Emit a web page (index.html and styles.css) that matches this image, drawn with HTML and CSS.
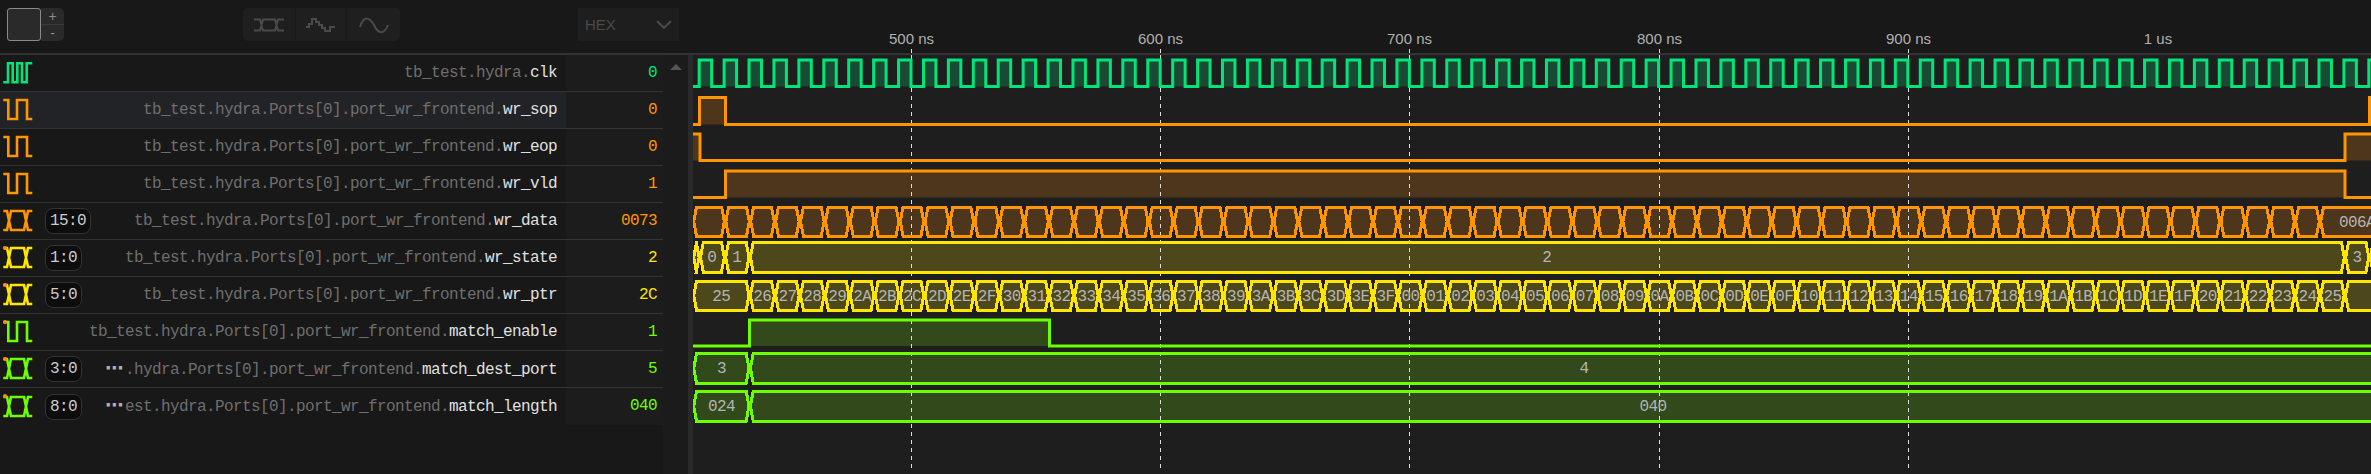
FILE: index.html
```html
<!DOCTYPE html>
<html lang="en">
<head>
    <meta charset="UTF-8">
    <meta name="viewport" content="width=device-width, initial-scale=1.0">
    <title>Waveform Viewer</title>
    <link rel="stylesheet" href="styles.css">
</head>
<body>

    <!-- icons used by the signal list -->
    <svg class="defs" width="0" height="0">
        <symbol id="icon-clk" viewBox="0 0 45 36">
            <path d="M3.3 27.3H8V8.3H12.7V27.3H17.3V8.3H22V27.3H26.7V8.3H32.3"/>
        </symbol>
        <symbol id="icon-bit" viewBox="0 0 45 36">
            <path d="M3.3 8H8.3V27H17V8H27V27H32.3"/>
        </symbol>
        <symbol id="icon-bus" viewBox="0 0 45 36">
            <path d="M3.3 8H7L11 27H24L28 8H32.3M3.3 27H7L11 8H24L28 27H32.3"/>
        </symbol>
    </svg>

    <!-- Toolbar -->
    <header class="toolbar">
        <div class="controls">
            <div class="height-box"></div>
            <div class="stepper">
                <span>+</span>
                <span>-</span>
            </div>
            <div class="mode-group">
                <button class="mode-btn mode-enum">
                    <svg width="32" height="16" viewBox="0 0 32 16"><path d="M1 2.500H7L10 13.500H22L25 2.500H31M1 13.500H7L10 2.500H22L25 13.500H31"/></svg>
                </button>
                <button class="mode-btn mode-step">
                    <svg width="32" height="16" viewBox="0 0 32 16"><path d="M1 10H4V7H7V2H11V5H14V8H17V11H20V14H25V10H30"/></svg>
                </button>
                <button class="mode-btn mode-line">
                    <svg width="30" height="18" viewBox="0 0 30 18"><path d="M1 11C5 -1 10 1 15 9C19 18 25 19 29 9"/></svg>
                </button>
            </div>
            <div class="radix">
                <span>HEX</span>
                <svg width="16" height="9" viewBox="0 0 16 9"><path d="M1 1L8 8L15 1"/></svg>
            </div>
        </div>
        <svg id="ruler" class="ruler" viewBox="693 0 1678 53"></svg>
    </header>

    <main class="main">
        <div class="signals">
            <div class="row green">
                <svg class="sig-icon"><use href="#icon-clk"/></svg>
                <div class="name"><span class="scope">tb_test.hydra.</span><span class="leaf">clk</span></div>
                <div class="value">0</div>
            </div>
            <div class="row orange active">
                <svg class="sig-icon"><use href="#icon-bit"/></svg>
                <div class="name"><span class="scope">tb_test.hydra.Ports[0].port_wr_frontend.</span><span class="leaf">wr_sop</span></div>
                <div class="value">0</div>
            </div>
            <div class="row orange">
                <svg class="sig-icon"><use href="#icon-bit"/></svg>
                <div class="name"><span class="scope">tb_test.hydra.Ports[0].port_wr_frontend.</span><span class="leaf">wr_eop</span></div>
                <div class="value">0</div>
            </div>
            <div class="row orange">
                <svg class="sig-icon"><use href="#icon-bit"/></svg>
                <div class="name"><span class="scope">tb_test.hydra.Ports[0].port_wr_frontend.</span><span class="leaf">wr_vld</span></div>
                <div class="value">1</div>
            </div>
            <div class="row orange">
                <svg class="sig-icon"><use href="#icon-bus"/></svg>
                <span class="width">15:0</span>
                <div class="name"><span class="scope">tb_test.hydra.Ports[0].port_wr_frontend.</span><span class="leaf">wr_data</span></div>
                <div class="value">0073</div>
            </div>
            <div class="row yellow marked">
                <svg class="sig-icon"><use href="#icon-bus"/></svg>
                <span class="width">1:0</span>
                <div class="name"><span class="scope">tb_test.hydra.Ports[0].port_wr_frontend.</span><span class="leaf">wr_state</span></div>
                <div class="value">2</div>
            </div>
            <div class="row yellow marked">
                <svg class="sig-icon"><use href="#icon-bus"/></svg>
                <span class="width">5:0</span>
                <div class="name"><span class="scope">tb_test.hydra.Ports[0].port_wr_frontend.</span><span class="leaf">wr_ptr</span></div>
                <div class="value">2C</div>
            </div>
            <div class="row lime marked">
                <svg class="sig-icon"><use href="#icon-bit"/></svg>
                <div class="name"><span class="scope">tb_test.hydra.Ports[0].port_wr_frontend.</span><span class="leaf">match_enable</span></div>
                <div class="value">1</div>
            </div>
            <div class="row lime marked">
                <svg class="sig-icon"><use href="#icon-bus"/></svg>
                <span class="width">3:0</span>
                <div class="name"><span class="dots">⋯</span><span class="scope">.hydra.Ports[0].port_wr_frontend.</span><span class="leaf">match_dest_port</span></div>
                <div class="value">5</div>
            </div>
            <div class="row lime marked last">
                <svg class="sig-icon"><use href="#icon-bus"/></svg>
                <span class="width">8:0</span>
                <div class="name"><span class="dots">⋯</span><span class="scope">est.hydra.Ports[0].port_wr_frontend.</span><span class="leaf">match_length</span></div>
                <div class="value">040</div>
            </div>
        </div>
        <div class="scroll-col"><span class="scroll-up"></span></div>
        <div class="divider"></div>
        <svg id="waves" class="waves" viewBox="693 55 1678 419"></svg>
    </main>

    <script src="script.js"></script>
</body>
</html>
```

FILE: styles.css
```css
* {
    box-sizing: border-box;
}
body {
    margin: 0;
    width: 2371px;
    height: 474px;
    overflow: hidden;
    background-color: #181818;
    font-family: "Liberation Mono", monospace;
    font-size: 16px;
    letter-spacing: -0.6px;
}
.defs {
    position: absolute;
}

/* toolbar */
.toolbar {
    display: flex;
    height: 55px;
    border-bottom: 2px solid #333;
    letter-spacing: 0;
}
.controls {
    display: flex;
    align-items: flex-start;
    width: 693px;
    padding: 8px 0 0 7px;
}
.height-box {
    width: 34px;
    height: 33px;
    background-color: #2a2a2a;
    border: 1px solid #8a8a8a;
    border-radius: 3px;
}
.stepper {
    display: flex;
    flex-direction: column;
    width: 23px;
    height: 33px;
    background-color: #2a2a2a;
    border-radius: 0 5px 5px 0;
    color: #8c8c8c;
    font-family: "Liberation Sans", sans-serif;
    font-size: 14px;
    text-align: center;
}
.stepper span {
    flex: 1;
    line-height: 16px;
}
.stepper span:first-child {
    border-bottom: 1px solid #3a3a3a;
}
.mode-group {
    display: flex;
    height: 33px;
    margin-left: 179px;
    background-color: #1f1f1f;
    border-radius: 5px;
}
.mode-btn {
    display: flex;
    align-items: center;
    justify-content: center;
    padding: 0;
    height: 33px;
    background: none;
    border: none;
    border-right: 1px solid #1a1a1a;
}
.mode-btn:last-child {
    border-right: none;
}
.mode-enum {
    width: 53px;
}
.mode-step {
    width: 51px;
}
.mode-line {
    width: 53px;
}
.mode-btn path,
.radix path {
    fill: none;
    stroke: #4a4a4a;
    stroke-width: 2;
}
.radix {
    display: flex;
    align-items: center;
    justify-content: space-between;
    width: 101px;
    height: 33px;
    margin-left: 178px;
    padding: 0 7px;
    background-color: #1e1e1e;
    color: #4a4a4a;
    font-family: "Liberation Sans", sans-serif;
    font-size: 15px;
}
.ruler {
    width: 1678px;
    height: 53px;
}
.ruler text {
    fill: #b0b0b0;
    font-family: "Liberation Sans", sans-serif;
    font-size: 15px;
    text-anchor: middle;
}
.ruler line {
    stroke: #ddd;
}

/* signal list */
.main {
    display: flex;
    height: 419px;
}
.signals {
    width: 663px;
}
.row {
    position: relative;
    display: flex;
    align-items: center;
    height: 37px;
    border-bottom: 1px solid #333;
}
.row.last {
    border-bottom: none;
}
.row.active {
    background-color: #222326;
}
.row.marked::before {
    content: "";
    position: absolute;
    left: 3px;
    top: 6px;
    width: 4px;
    height: 4px;
    border-radius: 50%;
    background-color: #ff8c1a;
}
.green {
    color: #00e57a;
}
.orange {
    color: #ff9500;
}
.yellow {
    color: #ffe600;
}
.lime {
    color: #6dff00;
}
.sig-icon {
    flex: none;
    width: 45px;
    height: 36px;
    fill: none;
    stroke: currentColor;
    stroke-width: 2.6;
}
.width {
    flex: none;
    height: 26px;
    padding: 0 4px;
    background-color: #0d0d0d;
    border: 1px solid #333;
    border-radius: 8px;
    color: #ccc;
    line-height: 24px;
}
.name {
    flex: 1;
    min-width: 0;
    padding-right: 9px;
    overflow: hidden;
    text-align: right;
    white-space: nowrap;
}
.scope {
    color: #6e6e6e;
}
.leaf {
    color: #e0e0e0;
}
.dots {
    padding-right: 2px;
    color: #b0b0b0;
    font-family: "DejaVu Sans", sans-serif;
    font-size: 18px;
    font-weight: 700;
    letter-spacing: 0;
    line-height: 16px;
}
.value {
    flex: none;
    align-self: stretch;
    width: 97px;
    padding-right: 6px;
    background-color: #1c1c1c;
    line-height: 36px;
    text-align: right;
}

/* scrollbar and splitter */
.scroll-col {
    width: 25px;
    background-color: #1b1b1b;
}
.scroll-up {
    display: block;
    width: 0;
    margin: 9px 0 0 7px;
    border-left: 6px solid transparent;
    border-right: 6px solid transparent;
    border-bottom: 6px solid #555;
}
.divider {
    width: 5px;
    background-color: #2a2a2a;
}

/* waveform canvas */
.waves {
    width: 1678px;
    height: 419px;
    background-color: #1e1e1e;
}
.waves .outline {
    fill: none;
    stroke-width: 3;
}
.waves .bus {
    stroke-width: 3;
    shape-rendering: crispEdges;
}
.waves .grid {
    stroke: #ddd;
    stroke-width: 1;
    stroke-dasharray: 4 4;
}
.waves text {
    fill: #b4b4b4;
    font-family: "Liberation Mono", monospace;
    font-size: 16px;
    letter-spacing: -0.6px;
    text-anchor: middle;
}
```

FILE: script.js
```js
const NS = "http://www.w3.org/2000/svg";
const waves = document.getElementById("waves");
const ruler = document.getElementById("ruler");

const GREEN = { line: "#00e57a", fill: "#1a4a33" };
const ORANGE = { line: "#ff9500", fill: "#4d361b" };
const YELLOW = { line: "#ffe600", fill: "#4d481b" };
const LIME = { line: "#6dff00", fill: "#32491b" };

const X_END = 2380;

// time in ns to page x
function tx(t) {
    return 911 + (t - 500) * 2.492;
}

function add(parent, tag, attrs, text) {
    let el = document.createElementNS(NS, tag);
    for (let key in attrs) {
        el.setAttribute(key, attrs[key]);
    }
    if (text) el.textContent = text;
    parent.appendChild(el);
    return el;
}

let fills = add(waves, "g", {});
let grid = add(waves, "g", {});
let lines = add(waves, "g", {});
let labels = add(waves, "g", {});

// highs is a list of [x0, x1]
function bitRow(color, top, low, highs) {
    let d = "M693 " + low;
    highs.forEach((h) => {
        add(fills, "rect", { x: h[0], y: top, width: h[1] - h[0], height: low - top, fill: color.fill });
        d += `H${h[0]}V${top}H${h[1]}V${low}`;
    });
    d += "H" + X_END;
    add(lines, "path", { d: d, stroke: color.line, class: "outline" });
}

// segs is a list of boundaries, names[i] sits in segment i
function busRow(color, top, bottom, edges, names, textX) {
    let mid = (top + bottom) / 2;
    for (let i = 0; i < edges.length - 1; i++) {
        let a = edges[i];
        let b = edges[i + 1];
        let pts = [
            [a + 0.7, mid], [a + 3.5, top], [b - 3.5, top],
            [b - 0.7, mid], [b - 3.5, bottom], [a + 3.5, bottom]
        ].map((p) => p.join(",")).join(" ");
        add(fills, "polygon", { points: pts, fill: color.fill });
        add(lines, "polygon", { points: pts, fill: "none", stroke: color.line, class: "bus" });
        if (names && names[i]) {
            let x = textX && textX[i] ? textX[i] : (a + b) / 2;
            add(labels, "text", { x: x, y: mid + 5 }, names[i]);
        }
    }
}

// clock
let clkHighs = [];
for (let t = 415; tx(t) < X_END; t += 10) {
    clkHighs.push([tx(t), tx(t + 5)]);
}
bitRow(GREEN, 60, 86.5, clkHighs);

bitRow(ORANGE, 97.5, 124.5, [[699.5, 725.5], [2369.5, X_END]]);
bitRow(ORANGE, 134, 160.5, [[680, 700], [2345, X_END]]);
bitRow(ORANGE, 171, 197.5, [[725.5, 2345]]);

// wr_data changes on every clock from 425 ns
let dataEdges = [693];
for (let t = 425; t <= 1065; t += 10) {
    dataEdges.push(tx(t) + 1);
}
dataEdges.push(X_END + 20);
busRow(ORANGE, 207, 236, dataEdges);
add(labels, "text", { x: 2357, y: 226.500 }, "006A");

// wr_state
busRow(YELLOW, 242.5, 272, [693, 699.8, 725, 749.7, 2345, 2369.5, X_END],
    [null, "0", "1", "2", "3"], [null, 711.7, 736.7, 1546.7, 2357]);

// wr_ptr counts up through the 6 bit range and wraps round to 25
let ptrEdges = [693, 749.7];
let ptrNames = ["25"];
for (let i = 0; i < 64; i++) {
    ptrEdges.push(tx(435 + (i + 1) * 10) + 1);
    let n = (0x26 + i) % 64;
    ptrNames.push(n.toString(16).toUpperCase().padStart(2, "0"));
}
ptrEdges.push(X_END + 20);
busRow(YELLOW, 281, 310, ptrEdges, ptrNames);

bitRow(LIME, 320, 346, [[749.5, 1049.5]]);
busRow(LIME, 353.6, 383, [693, 749.7, X_END + 20], ["3", "4"], [721.4, 1584]);
busRow(LIME, 391.3, 421, [693, 749.7, X_END + 20], ["024", "040"], [721.4, 1653]);

// time axis
[500, 600, 700, 800, 900].forEach((t) => {
    let x = Math.round(tx(t)) + 0.5;
    add(ruler, "text", { x: x, y: 44 }, t + " ns");
    add(ruler, "line", { x1: x, x2: x, y1: 49, y2: 53 });
    add(grid, "line", { x1: x, x2: x, y1: 88, y2: 470, class: "grid" });
    add(grid, "line", { x1: x, x2: x, y1: 55, y2: 60, stroke: "#ddd" });
});
add(ruler, "text", { x: 2158, y: 44 }, "1 us");
```
